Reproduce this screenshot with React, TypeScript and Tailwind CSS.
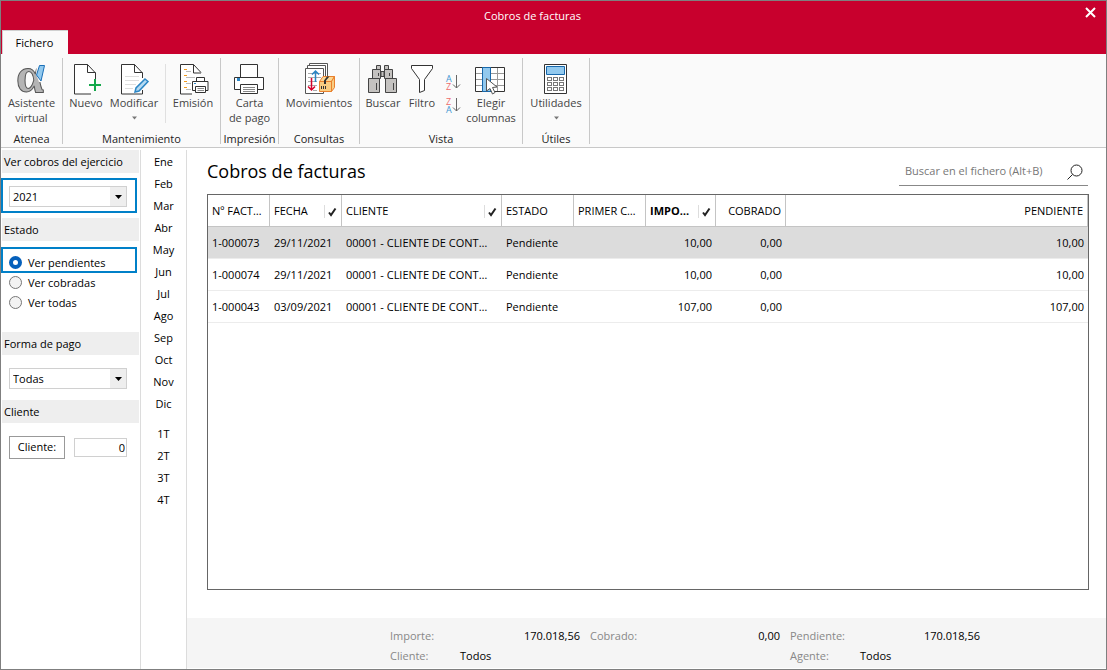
import React, { useState } from 'react'

const MONTHS = ['Ene', 'Feb', 'Mar', 'Abr', 'May', 'Jun', 'Jul', 'Ago', 'Sep', 'Oct', 'Nov', 'Dic']
const QUARTERS = ['1T', '2T', '3T', '4T']
const STATUS = ['Ver pendientes', 'Ver cobradas', 'Ver todas']

const ROWS = [
  { id: '1-000073', date: '29/11/2021', client: '00001 - CLIENTE DE CONTADO', status: 'Pendiente', amount: '10,00', paid: '0,00', pending: '10,00' },
  { id: '1-000074', date: '29/11/2021', client: '00001 - CLIENTE DE CONTADO', status: 'Pendiente', amount: '10,00', paid: '0,00', pending: '10,00' },
  { id: '1-000043', date: '03/09/2021', client: '00001 - CLIENTE DE CONTADO', status: 'Pendiente', amount: '107,00', paid: '0,00', pending: '107,00' },
]

function AlphaIcon() {
  return (
    <svg width="32" height="32" viewBox="0 0 32 32" className="overflow-visible">
      <text x="0" y="28" fontFamily="Liberation Serif, serif" fontWeight="bold" fontSize="50" fill="#b4b4b4" stroke="#555" strokeWidth="1">α</text>
      <path d="M21 0H31V10L27 18H23L20 10Z" fill="#fafafa" />
      <path d="M23.500 1.500H28.500L25 17L20.500 11Z" fill="#92c9ee" stroke="#1a6fb8" />
    </svg>
  )
}

function NewIcon() {
  return (
    <svg width="32" height="32" viewBox="0 0 32 32" fill="none">
      <path d="M25.500 17V9L17.500 .5H4.500V30H21" fill="#fff" stroke="#333" />
      <path d="M17.500 .5V8.500H25.500" stroke="#333" />
      <path d="M19 21H31M25 15V27" stroke="#14a84b" strokeWidth="2" />
    </svg>
  )
}

function EditIcon() {
  return (
    <svg width="32" height="32" viewBox="0 0 32 32" fill="none">
      <path d="M24.500 14V9L16.500 .5H3.500V30H24.500V26" fill="#fff" stroke="#333" />
      <path d="M16.500 .5V8.500H24.500" stroke="#333" />
      <path d="M7 12.500H21M7 16.500H21M7 20.500H18M7 24.500H15" stroke="#ddd" />
      <path d="M27 15L30 17.500L21 27L17 28L18 24Z" fill="#b5daf2" stroke="#2b86c5" strokeWidth="1.5" />
    </svg>
  )
}

function EmitIcon() {
  return (
    <svg width="32" height="32" viewBox="0 0 32 32" fill="none">
      <path d="M15 30H3.500V.5H16.500L24 8.500" fill="#fff" stroke="#333" />
      <path d="M16.500 .5V9H24" stroke="#333" />
      <path d="M7 5.500H10M7 11.500H10M7 17.500H10M7 23.500H10" stroke="#f39a1e" />
      <path d="M9 7.500H14M9 13.500H18M9 19.500H14M9 25.500H14" stroke="#bbb" />
      <path d="M19.500 18V13.500H27.500V18" fill="#fff" stroke="#333" />
      <path d="M15.500 17.500H31V26.500H15.500Z" fill="#fff" stroke="#333" />
      <path d="M18.500 22.500H28.500V28.500H18.500Z" fill="#fff" stroke="#333" />
      <path d="M20.500 24.500H27M20.500 26.500H27" stroke="#888" />
      <path d="M17 19.500H19" stroke="#2b86c5" />
    </svg>
  )
}

function PrinterIcon() {
  return (
    <svg width="32" height="32" viewBox="0 0 32 32" fill="#fff" stroke="#333">
      <path d="M6.500 13.500V.5H23.500V13.500" />
      <path d="M.5 13.500H29.500V25.500H.5Z" />
      <path d="M6.500 20.500H23.500V29.500H6.500Z" />
      <path d="M9 23.500H21M9 25.500H21M9 27.500H21" stroke="#888" />
      <path d="M3 14H6V17H3Z" fill="#2b86c5" stroke="none" />
    </svg>
  )
}

function MovesIcon() {
  return (
    <svg width="32" height="32" viewBox="0 0 32 32" fill="#fff" stroke="#555" className="overflow-visible">
      <path d="M6.500 -.5H24.500V24H6.500Z" />
      <path d="M4.500 1.500H22.500V27H4.500Z" />
      <path d="M2.500 4.500H20.500V29.500H2.500Z" />
      <path d="M5 9.500H18M5 13.500H18M5 17.500H14M5 21.500H14M10 26.500H14" stroke="#aaa" />
      <path d="M12.500 18V7M9 10.500L12.500 7L16 10.500" stroke="#2b86c5" strokeWidth="1.500" fill="none" />
      <path d="M8.500 14V26M5 22.500L8.500 26L12 22.500" stroke="#d6002a" strokeWidth="1.500" fill="none" />
      <path d="M16.500 17.500L20 12.500H31.500L28.500 17.500Z" fill="#fbd793" stroke="#e9802d" />
      <path d="M16.500 17.500H28.500V27.500H16.500ZM28.500 17.500L31.500 12.500V23.500L28.500 27.500Z" fill="#f8cd82" stroke="#e9802d" />
      <path d="M21 20V16.500L24 12.500H26.500L23 16.500V20Z" fill="#333" stroke="none" />
      <path d="M18.500 22V25M20.500 22V25M22.500 22V25" stroke="#333" />
    </svg>
  )
}

function BinocularsIcon() {
  return (
    <svg width="32" height="32" viewBox="0 0 32 32" fill="#c4c2c0" stroke="#444">
      <path d="M9.500 1.500H13.500V5.500H9.500ZM17.500 1.500H21.500V5.500H17.500Z" />
      <path d="M14 7.500H17V12.500H14Z" />
      <path d="M5.500 5.500H13.500V14.500H5.500ZM17.500 5.500H25.500V14.500H17.500Z" />
      <path d="M1.500 14.500H12.500V28.500H1.500ZM18.500 14.500H29.500V28.500H18.500Z" />
      <path d="M9.500 19V26M26.500 19V26M11.500 9V12M22.500 9V12" />
    </svg>
  )
}

function FunnelIcon() {
  return (
    <svg width="32" height="32" viewBox="0 0 32 32" fill="#fff" stroke="#333">
      <path d="M5.500 1.500H26.500V4.500L18.500 15.500V26.500L13.500 28.500V15.500L5.500 4.500Z" />
    </svg>
  )
}

function SortIcon({ first, second, flip }: { first: string; second: string; flip?: boolean }) {
  return (
    <svg width="16" height="17" viewBox="0 0 16 17" fill="none" className="overflow-visible">
      <text x="1" y="8" fontFamily="Open Sans, sans-serif" fontSize="9" fill={flip ? '#ee6a6a' : '#3f97d3'}>{first}</text>
      <text x="1" y="16" fontFamily="Open Sans, sans-serif" fontSize="9" fill={flip ? '#3f97d3' : '#ee6a6a'}>{second}</text>
      <path d="M11.500 1V14M8 10.500L11.500 14L15 10.500" stroke="#666" />
    </svg>
  )
}

function ColumnsIcon() {
  return (
    <svg width="32" height="32" viewBox="0 0 32 32" fill="none">
      <path d="M.5 3.500H29.500V27.500H.5Z" fill="#fff" stroke="#333" />
      <path d="M1 9.500H29M1 15.500H29M1 21.500H29M22.500 4V27" stroke="#999" />
      <path d="M7.500 3.500H15.500V27.500H7.500Z" fill="#92c9ee" stroke="#1768ac" />
      <path d="M11.500 14.500V27L15 24.500L17.500 30L20 28.500L17.500 23.500L22 23Z" fill="#fff" stroke="#555" />
    </svg>
  )
}

function CalculatorIcon() {
  const cells = [6, 12, 18]
  return (
    <svg width="32" height="32" viewBox="0 0 32 32" fill="#fff">
      <path d="M4.500 .5H26.500V29.500H4.500Z" stroke="#333" />
      <path d="M6.500 2.500H24.500V10.500H6.500Z" fill="#92c9ee" stroke="#1768ac" />
      {[13, 18, 23].map((y) =>
        cells.map((x) => <rect key={`${x}-${y}`} x={x + 1.5} y={y + 0.5} width="4" height="3" stroke="#777" />)
      )}
    </svg>
  )
}

function DownArrow({ className }: { className: string }) {
  return (
    <svg width="7" height="4" viewBox="0 0 7 4" className={className}>
      <path d="M0 0H7L3.500 4Z" fill="currentColor" />
    </svg>
  )
}

type RibbonButtonProps = {
  icon: React.ReactNode
  label: string
  second?: string
  menu?: boolean
  className: string
}

function RibbonButton({ icon, label, second, menu, className }: RibbonButtonProps) {
  return (
    <button className={`flex flex-col items-center whitespace-nowrap text-[#444] leading-[15px] ${className}`}>
      <span className="h-[31px]">{icon}</span>
      <span>{label}</span>
      {second && <span>{second}</span>}
      {menu && <DownArrow className="mt-1.5 w-[5px] text-[#777]" />}
    </button>
  )
}

function RibbonGroup({ title, className, children }: { title: string; className: string; children: React.ReactNode }) {
  return (
    <div className={`flex h-[86px] flex-col border-r border-[#c8c8c8] ${className}`}>
      <div className="flex flex-1 pt-1.5">{children}</div>
      <div className="text-center leading-[10px] whitespace-nowrap text-[#222]">{title}</div>
    </div>
  )
}

function SectionTitle({ children }: { children: React.ReactNode }) {
  return <h2 className="ml-px h-[23px] bg-[#eee] pl-0.5 leading-6">{children}</h2>
}

function Dropdown({ label, options }: { label: string; options: string[] }) {
  return (
    <div className="relative h-[21px] w-[118px] border border-[#d0d0d0]">
      <select aria-label={label} className="h-full w-full appearance-none bg-white pt-0.5 pl-[3px] outline-none">
        {options.map((o) => (
          <option key={o}>{o}</option>
        ))}
      </select>
      <span className="pointer-events-none absolute inset-y-0 right-0 flex w-4 items-center justify-center bg-[#eee]">
        <DownArrow className="w-[7px] text-black" />
      </span>
    </div>
  )
}

function HeaderCell({ label, checked, align, bold }: { label: string; checked?: boolean; align?: string; bold?: boolean }) {
  return (
    <th className={`border-r border-b border-[#c4c4c4] pt-0.5 pr-1 pl-1 ${bold ? 'font-bold' : 'font-normal'}`}>
      <div className="flex items-center">
        <span className={`min-w-0 flex-1 truncate ${align ?? 'text-left'}`}>{label}</span>
        {checked && (
          <span className="ml-1 flex h-[13px] w-[13px] shrink-0 items-center justify-end border-l border-[#ddd]">
            <svg width="9" height="10" viewBox="0 0 9 10" fill="none">
              <path d="M1 5.500L3 8L7.500 1.500" stroke="#222" strokeWidth="2" />
            </svg>
          </span>
        )}
      </div>
    </th>
  )
}

function Total({ label, value }: { label: string; value: string }) {
  return (
    <div className="flex w-[190px] justify-between">
      <span className="text-[#888]">{label}</span>
      <span>{value}</span>
    </div>
  )
}

function Scope({ label, value }: { label: string; value: string }) {
  return (
    <div className="flex w-[190px]">
      <span className="w-[70px] text-[#888]">{label}</span>
      <span>{value}</span>
    </div>
  )
}

export default function App(): React.JSX.Element {
  const [status, setStatus] = useState(STATUS[0])
  const [selected, setSelected] = useState(ROWS[0].id)

  return (
    <div className="flex min-h-screen flex-col border border-[#7f7f7f] bg-white font-['Open_Sans','Noto_Sans',sans-serif] text-[11px] text-black">
      <header className="flex h-[53px] flex-col bg-[#c8002d]">
        <div className="relative flex h-[29px] items-center justify-center pt-0.5 pr-11 text-white">
          <span className="ml-0.5">Cobros de facturas</span>
          <button aria-label="Cerrar" className="absolute top-1.5 right-2.5">
            <svg width="11" height="11" viewBox="0 0 11 11">
              <path d="M1 1L10 10M10 1L1 10" stroke="#fff" strokeWidth="2" />
            </svg>
          </button>
        </div>
        <button className="ml-px h-6 w-[66px] border-t border-l border-[#d0d0d0] bg-[#fafafa] pt-0.5 pr-0.5">Fichero</button>
      </header>

      <nav className="flex h-[94px] border-b border-[#c8c8c8] bg-[#fafafa] pt-1">
        <RibbonGroup title="Atenea" className="w-[62px]">
          <RibbonButton icon={<AlphaIcon />} label="Asistente" second="virtual" className="w-full" />
        </RibbonGroup>
        <RibbonGroup title="Mantenimiento" className="w-[158px]">
          <RibbonButton icon={<NewIcon />} label="Nuevo" className="w-[46px]" />
          <RibbonButton icon={<EditIcon />} label="Modificar" menu className="w-[50px]" />
          <div className="ml-1.5 h-[59px] w-px bg-[#e0e0e0]" />
          <RibbonButton icon={<EmitIcon />} label="Emisión" className="w-[54px]" />
        </RibbonGroup>
        <RibbonGroup title="Impresión" className="w-[58px]">
          <RibbonButton icon={<PrinterIcon />} label="Carta" second="de pago" className="w-full" />
        </RibbonGroup>
        <RibbonGroup title="Consultas" className="w-[81px]">
          <RibbonButton icon={<MovesIcon />} label="Movimientos" className="w-full" />
        </RibbonGroup>
        <RibbonGroup title="Vista" className="w-[163px]">
          <RibbonButton icon={<BinocularsIcon />} label="Buscar" className="w-[46px]" />
          <RibbonButton icon={<FunnelIcon />} label="Filtro" className="w-[32px]" />
          <div className="flex w-[29px] flex-col items-center gap-1.5 pt-2.5">
            <button aria-label="Orden ascendente"><SortIcon first="A" second="Z" /></button>
            <button aria-label="Orden descendente"><SortIcon first="Z" second="A" flip /></button>
          </div>
          <RibbonButton icon={<ColumnsIcon />} label="Elegir" second="columnas" className="w-[48px]" />
        </RibbonGroup>
        <RibbonGroup title="Útiles" className="w-[67px]">
          <RibbonButton icon={<CalculatorIcon />} label="Utilidades" menu className="w-full" />
        </RibbonGroup>
      </nav>

      <div className="flex flex-1">
        <aside className="mt-0.5 w-[140px] shrink-0 border-r border-[#dcdcdc] pr-px">
          <SectionTitle>Ver cobros del ejercicio</SectionTitle>
          <div className="my-[5px] mr-0.5 border-2 border-[#0080c8] pt-1.5 pb-1 pl-1.5">
            <Dropdown label="Ejercicio" options={['2021', '2020', '2019']} />
          </div>
          <SectionTitle>Estado</SectionTitle>
          <div className="mt-1.5">
            {STATUS.map((s) => (
              <label
                key={s}
                className={
                  s === STATUS[0]
                    ? 'mr-0.5 flex h-[26px] items-end gap-1.5 border-2 border-[#0080c8] pl-1.5'
                    : 'flex h-5 items-center gap-1.5 pl-2'
                }
              >
                <input
                  type="radio"
                  name="status"
                  checked={status === s}
                  onChange={() => setStatus(s)}
                  className="mb-0.5 h-[13px] w-[13px] appearance-none rounded-full border border-[#777] bg-[#f3f3f3] checked:border-4 checked:border-[#0560bb] checked:bg-white"
                />
                <span>{s}</span>
              </label>
            ))}
          </div>
          <div className="mt-[19px]">
            <SectionTitle>Forma de pago</SectionTitle>
          </div>
          <div className="mt-[13px] mb-[11px] pl-2">
            <Dropdown label="Forma de pago" options={['Todas', 'Contado', 'Transferencia']} />
          </div>
          <SectionTitle>Cliente</SectionTitle>
          <div className="mt-[13px] flex items-center gap-[9px] pl-2">
            <button className="h-[23px] w-14 border border-[#999]">Cliente:</button>
            <input aria-label="Cliente" defaultValue="0" className="h-[19px] w-[53px] border border-[#d0d0d0] pr-px text-right outline-none" />
          </div>
        </aside>

        <div className="mt-0.5 flex w-[46px] shrink-0 flex-col border-r border-[#dcdcdc] pt-px">
          {MONTHS.map((m) => (
            <button key={m} className="h-[22px]">{m}</button>
          ))}
          <div className="mt-2 flex flex-col">
            {QUARTERS.map((q) => (
              <button key={q} className="h-[22px]">{q}</button>
            ))}
          </div>
        </div>

        <div className="flex min-w-0 flex-1 flex-col">
          <main className="flex flex-1 flex-col pr-[17px] pb-7 pl-5">
            <div className="flex h-[46px] items-start justify-between pr-px">
              <h1 className="pt-2 text-[18px] leading-[30px]">Cobros de facturas</h1>
              <label className="mt-2.5 flex h-7 w-[189px] items-center justify-between border-b border-[#888] pr-[5px] pl-1.5">
                <input placeholder="Buscar en el fichero (Alt+B)" className="w-[155px] outline-none placeholder:text-[#777]" />
                <svg width="16" height="16" viewBox="0 0 16 16" fill="none" stroke="#222">
                  <circle cx="9.500" cy="6.500" r="5.500" />
                  <path d="M5.500 10.500L.5 15.500" />
                </svg>
              </label>
            </div>

            <div className="flex-1 border border-[#666]">
              <table className="w-full table-fixed border-separate border-spacing-0">
                <colgroup>
                  <col className="w-[62px]" />
                  <col className="w-[72px]" />
                  <col className="w-[160px]" />
                  <col className="w-[72px]" />
                  <col className="w-[72px]" />
                  <col className="w-[70px]" />
                  <col className="w-[70px]" />
                  <col />
                </colgroup>
                <thead>
                  <tr className="h-8">
                    <HeaderCell label="Nº FACTURA" />
                    <HeaderCell label="FECHA" checked />
                    <HeaderCell label="CLIENTE" checked />
                    <HeaderCell label="ESTADO" />
                    <HeaderCell label="PRIMER COBRO" />
                    <HeaderCell label="IMPORTE" checked bold align="text-right" />
                    <HeaderCell label="COBRADO" align="text-right" />
                    <HeaderCell label="PENDIENTE" align="text-right" />
                  </tr>
                </thead>
                <tbody>
                  {ROWS.map((row) => (
                    <tr
                      key={row.id}
                      onClick={() => setSelected(row.id)}
                      className={`h-8 *:truncate *:border-b *:border-[#ececec] *:px-1 *:pt-0.5 ${selected === row.id ? 'bg-[#dcdcdc]' : 'bg-white'}`}
                    >
                      <td>{row.id}</td>
                      <td>{row.date}</td>
                      <td>
                        <div className="mr-2 truncate">{row.client}</div>
                      </td>
                      <td>{row.status}</td>
                      <td></td>
                      <td className="text-right">{row.amount}</td>
                      <td className="text-right">{row.paid}</td>
                      <td className="text-right">{row.pending}</td>
                    </tr>
                  ))}
                </tbody>
              </table>
            </div>
          </main>

          <footer className="mb-px flex h-[50px] flex-col bg-[#f5f5f5] pt-2 pl-[203px] leading-5">
            <div className="flex gap-2.5">
              <Total label="Importe:" value="170.018,56" />
              <Total label="Cobrado:" value="0,00" />
              <Total label="Pendiente:" value="170.018,56" />
            </div>
            <div className="flex gap-[210px]">
              <Scope label="Cliente:" value="Todos" />
              <Scope label="Agente:" value="Todos" />
            </div>
          </footer>
        </div>
      </div>
    </div>
  )
}
